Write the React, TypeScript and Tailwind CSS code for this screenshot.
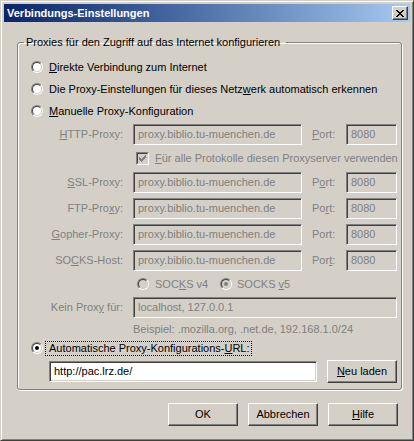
import type { ReactNode } from "react";

const sunken =
  "border border-t-[#808080] border-l-[#808080] border-b-white border-r-white shadow-[inset_1px_1px_0_#404040,inset_-1px_-1px_0_#d4d0c8]";
const raised =
  "border border-t-white border-l-white border-b-[#404040] border-r-[#404040] shadow-[inset_-1px_-1px_0_#808080] bg-[#d4d0c8]";

function Radio({ checked = false, disabled = false }: { checked?: boolean; disabled?: boolean }) {
  return (
    <span className="inline-flex h-[12px] w-[12px] shrink-0 rounded-full border border-t-[#808080] border-l-[#808080] border-b-white border-r-white">
      <span
        className={`flex h-full w-full items-center justify-center rounded-full border border-t-[#404040] border-l-[#404040] border-b-[#d4d0c8] border-r-[#d4d0c8] ${
          disabled ? "bg-[#d4d0c8]" : "bg-white"
        }`}
      >
        {checked && <span className={`h-[4px] w-[4px] rounded-full ${disabled ? "bg-[#808080]" : "bg-black"}`} />}
      </span>
    </span>
  );
}

function Checkbox() {
  return (
    <span className="inline-flex h-[13px] w-[13px] shrink-0 border border-t-[#808080] border-l-[#808080] border-b-white border-r-white">
      <span className="flex h-full w-full items-center justify-center border border-t-[#404040] border-l-[#404040] border-b-[#d4d0c8] border-r-[#d4d0c8] bg-[#d4d0c8]">
        <svg width="7" height="7" viewBox="0 0 7 7" shapeRendering="crispEdges">
          <path d="M0 2h1v1h1v1h1v-1h1v-1h1v-1h1v-1h1v3h-1v1h-1v1h-1v1h-1v1h-1v-1h-1v-1h-1z" fill="#808080" />
        </svg>
      </span>
    </span>
  );
}

function Field({ value, disabled = true, className = "" }: { value: string; disabled?: boolean; className?: string }) {
  return (
    <div
      className={`flex h-[21px] shrink-0 items-center pl-[4px] ${sunken} ${
        disabled ? "bg-[#d4d0c8] text-[#808080]" : "bg-white text-black"
      } ${className}`}
    >
      {value}
    </div>
  );
}

function Button({ children, className = "" }: { children: ReactNode; className?: string }) {
  return (
    <button className={`flex h-[23px] w-[70px] items-center justify-center text-black ${raised} ${className}`}>
      {children}
    </button>
  );
}

function ProxyRow({ label, port }: { label: ReactNode; port: ReactNode }) {
  return (
    <div className="flex h-[21px] items-center pl-[18px] text-[#808080]">
      <span className="w-[74px] text-right">{label}</span>
      <Field value="proxy.biblio.tu-muenchen.de" className="ml-[10px] w-[169px]" />
      <span className="ml-[10px] w-[34px]">{port}</span>
      <Field value="8080" className="w-[51px]" />
    </div>
  );
}

const MORE_PROXIES = [
  { label: <><u>S</u>SL-Proxy:</>, port: <>P<u>o</u>rt:</> },
  { label: <>FTP-Pro<u>x</u>y:</>, port: <>Po<u>r</u>t:</> },
  { label: <><u>G</u>opher-Proxy:</>, port: <>Port:</> },
  { label: <>SO<u>C</u>KS-Host:</>, port: <>Por<u>t</u>:</> },
];

export default function App() {
  return (
    <div className="h-[441px] w-[414px] border border-t-[#d4d0c8] border-l-[#d4d0c8] border-b-[#404040] border-r-[#404040] bg-[#d4d0c8] p-[3px] font-['Liberation_Sans',Arial,sans-serif] text-[11px] leading-[13px] text-black shadow-[inset_1px_1px_0_white,inset_-1px_-1px_0_#808080]">
      <div className="flex h-[18px] items-center justify-between bg-gradient-to-r from-[#0a246a] to-[#a6caf0] pl-[3px] pr-[2px]">
        <span className="font-bold text-white">Verbindungs-Einstellungen</span>
        <button className={`flex h-[14px] w-[16px] items-center justify-center ${raised}`}>
          <svg width="8" height="7" viewBox="0 0 8 7" shapeRendering="crispEdges">
            <path d="M0 0h2v1h1v1h2v-1h1v-1h2v1h-1v1h-1v1h-1v1h1v1h1v1h1v1h-2v-1h-1v-1h-2v1h-1v1h-2v-1h1v-1h1v-1h1v-1h-1v-1h-1v-1h-1z" fill="black" />
          </svg>
        </button>
      </div>

      <div className="flex flex-col">
        <fieldset className="ml-[13px] mt-[14px] w-[385px] rounded-[3px] border border-[#808080] pl-[6px] pr-[3px] pb-[6px] shadow-[inset_1px_1px_0_white,1px_1px_0_white]">
          <legend className="px-[2px] pr-[6px]">Proxies für den Zugriff auf das Internet konfigurieren</legend>
          <div className="flex flex-col pl-[7px] pt-[7px]">
            <label className="flex h-[22px] items-center gap-[6px]">
              <Radio />
              <span><u>D</u>irekte Verbindung zum Internet</span>
            </label>
            <label className="flex h-[22px] items-center gap-[6px]">
              <Radio />
              <span>Die Proxy-Einstellungen für dieses Netz<u>w</u>erk automatisch erkennen</span>
            </label>
            <label className="flex h-[22px] items-center gap-[6px]">
              <Radio />
              <span><u>M</u>anuelle Proxy-Konfiguration</span>
            </label>

            <div className="mt-[2px]">
              <ProxyRow label={<><u>H</u>TTP-Proxy:</>} port={<><u>P</u>ort:</>} />
            </div>
            <div className="flex h-[27px] items-center gap-[6px] pl-[105px] text-[#808080]">
              <Checkbox />
              <span><u>F</u>ür alle Protokolle diesen Proxyserver verwenden</span>
            </div>
            <div className="flex flex-col gap-[5px]">
              {MORE_PROXIES.map((p, i) => (
                <ProxyRow key={i} label={p.label} port={p.port} />
              ))}
            </div>
            <div className="flex h-[26px] items-center pl-[106px] text-[#808080]">
              <span className="flex w-[83px] items-center gap-[6px]">
                <Radio disabled />
                <span>SOC<u>K</u>S v4</span>
              </span>
              <span className="flex items-center gap-[5px]">
                <Radio checked disabled />
                <span>SOCKS <u>v</u>5</span>
              </span>
            </div>
            <div className="flex h-[21px] items-center pl-[18px] text-[#808080]">
              <span className="w-[74px] text-right">Kein Prox<u>y</u> für:</span>
              <Field value="localhost, 127.0.0.1" className="ml-[10px] w-[264px]" />
            </div>
            <div className="flex h-[22px] items-center pl-[102px] text-[#808080]">
              Beispiel: .mozilla.org, .net.de, 192.168.1.0/24
            </div>
            <div className="flex h-[16px] items-center">
              <Radio checked />
              <span className="ml-[2px] border border-dotted border-black pl-[3px] pr-[1px]">
                Automatische Proxy-Konfigurations-<u>U</u>RL:
              </span>
            </div>
            <div className="mt-[4px] flex h-[23px] items-center pl-[18px]">
              <Field value="http://pac.lrz.de/" disabled={false} className="w-[268px]" />
              <Button className="ml-[10px]">
                <span><u>N</u>eu laden</span>
              </Button>
            </div>
          </div>
        </fieldset>

        <div className="mt-[13px] flex justify-end gap-[10px] pr-[12px]">
          <Button>OK</Button>
          <Button>Abbrechen</Button>
          <Button>
            <span><u>H</u>ilfe</span>
          </Button>
        </div>
      </div>
    </div>
  );
}
